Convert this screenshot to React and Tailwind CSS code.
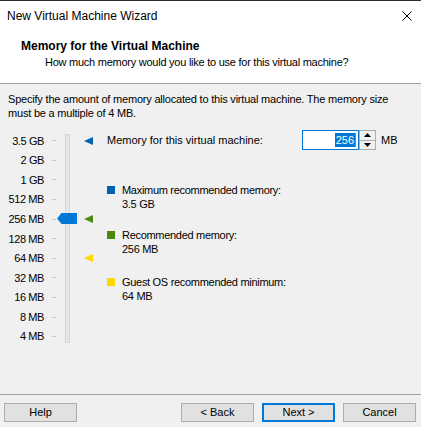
import React from "react";

const labels = ["3.5 GB", "2 GB", "1 GB", "512 MB", "256 MB", "128 MB", "64 MB", "32 MB", "16 MB", "8 MB", "4 MB"];

const markers = { 0: "#0063b1", 4: "#4b8a0c", 6: "#fcd800" };

const Tri = ({ color }) => (
  <svg width="9" height="8" viewBox="0 0 9 8">
    <polygon points="0,4 9,0 9,8" fill={color} />
  </svg>
);

const Legend = ({ color, title, value, className }) => (
  <div className={"flex " + className}>
    <div className="w-[8px] h-[8px] mt-[3px] mr-[7px]" style={{ background: color }} />
    <div className="leading-[14px] tracking-[-0.3px] whitespace-nowrap">
      <div>{title}</div>
      <div>{value}</div>
    </div>
  </div>
);

const Btn = ({ children, primary }) => (
  <button
    className={
      "w-[73px] h-[19px] flex items-center justify-center bg-[#e1e1e1] text-[11px] text-black " +
      (primary ? "border-2 border-[#0078d7]" : "border border-[#adadad]")
    }
  >
    {children}
  </button>
);

export default function App() {
  return (
    <div
      className="w-[421px] h-[427px] flex flex-col bg-[#f0f0f0] text-[11px] text-black overflow-hidden"
      style={{ fontFamily: '"Liberation Sans", Arial, sans-serif' }}
    >
      {/* header */}
      <div className="bg-white border-t border-[#2b2b2b] border-b border-b-[#a0a0a0] h-[84px]">
        <div className="h-[30px] flex items-center justify-between pl-[7px] pr-[9px] text-[12px]">
          <span>New Virtual Machine Wizard</span>
          <svg width="10" height="10" viewBox="0 0 10 10">
            <path d="M0.5 0.5 L9.5 9.5 M9.5 0.5 L0.5 9.5" stroke="#000" strokeWidth="1" />
          </svg>
        </div>
        <div className="pl-[21px] pt-[8px] leading-[15px] font-bold text-[12px]">Memory for the Virtual Machine</div>
        <div className="pl-[45px] leading-[16px] tracking-[-0.25px] whitespace-nowrap">
          How much memory would you like to use for this virtual machine?
        </div>
      </div>

      {/* body */}
      <div className="flex-1 px-[8px] pt-[8px]">
        <div className="leading-[14px] tracking-[-0.2px] whitespace-nowrap">
          Specify the amount of memory allocated to this virtual machine. The memory size
          <br />
          must be a multiple of 4 MB.
        </div>

        <div className="flex mt-[11px]">
          <div className="flex flex-col w-[48px]">
            {labels.map((l) => (
              <div key={l} className="h-[19.6px] flex items-center justify-end whitespace-nowrap">
                <span className="text-right tracking-[-0.4px]">{l}</span>
                <span className="w-[4px] h-px bg-[#c8c8c8] ml-[8px]" />
              </div>
            ))}
          </div>

          <div className="relative ml-[9px] mt-[3px] w-[5px] h-[209px] border border-[#d6d6d6] bg-[#e7e7e7]">
            <svg className="absolute left-[-9px] top-[78px]" width="20" height="11" viewBox="0 0 20 11">
              <polygon points="0,5.5 4.5,0 20,0 20,11 4.5,11" fill="#0078d7" />
            </svg>
          </div>

          <div className="flex flex-col ml-[14px]">
            {labels.map((l, i) => (
              <div key={l} className="h-[19.6px] flex items-center">
                {markers[i] ? <Tri color={markers[i]} /> : <span className="w-[9px]" />}
              </div>
            ))}
          </div>

          <div className="flex flex-col ml-[14px]">
            <div className="h-[20px] -mt-[1px] flex items-center">
              <span className="w-[195px] whitespace-nowrap">Memory for this virtual machine:</span>
              <div className="w-[57px] h-[20px] border border-[#0078d7] bg-white flex items-center justify-end pr-[2px]">
                <span className="bg-[#0078d7] text-white leading-[14px] px-px">256</span>
                <span className="w-px h-[14px] bg-[#e07000]" />
              </div>
              <div className="w-[17px] h-[20px] border border-[#adadad] bg-[#f0f0f0] flex flex-col">
                <div className="flex-1 flex items-center justify-center border-b border-[#adadad]">
                  <svg width="7" height="4" viewBox="0 0 7 4"><polygon points="3.5,0 7,4 0,4" fill="#000" /></svg>
                </div>
                <div className="flex-1 flex items-center justify-center">
                  <svg width="7" height="4" viewBox="0 0 7 4"><polygon points="0,0 7,0 3.5,4" fill="#000" /></svg>
                </div>
              </div>
              <span className="ml-[5px]">MB</span>
            </div>

            <Legend className="mt-[33px]" color="#0063b1" title="Maximum recommended memory:" value="3.5 GB" />
            <Legend className="mt-[17px]" color="#4b8a0c" title="Recommended memory:" value="256 MB" />
            <Legend className="mt-[19px]" color="#fcd800" title="Guest OS recommended minimum:" value="64 MB" />
          </div>
        </div>
      </div>

      {/* footer */}
      <div className="h-[33px] border-t border-[#a0a0a0] flex items-start pt-[8px] px-[4px]">
        <Btn>Help</Btn>
        <div className="flex-1" />
        <div className="flex gap-[8px] pr-px">
          <Btn>&lt; Back</Btn>
          <Btn primary>Next &gt;</Btn>
          <Btn>Cancel</Btn>
        </div>
      </div>
    </div>
  );
}
